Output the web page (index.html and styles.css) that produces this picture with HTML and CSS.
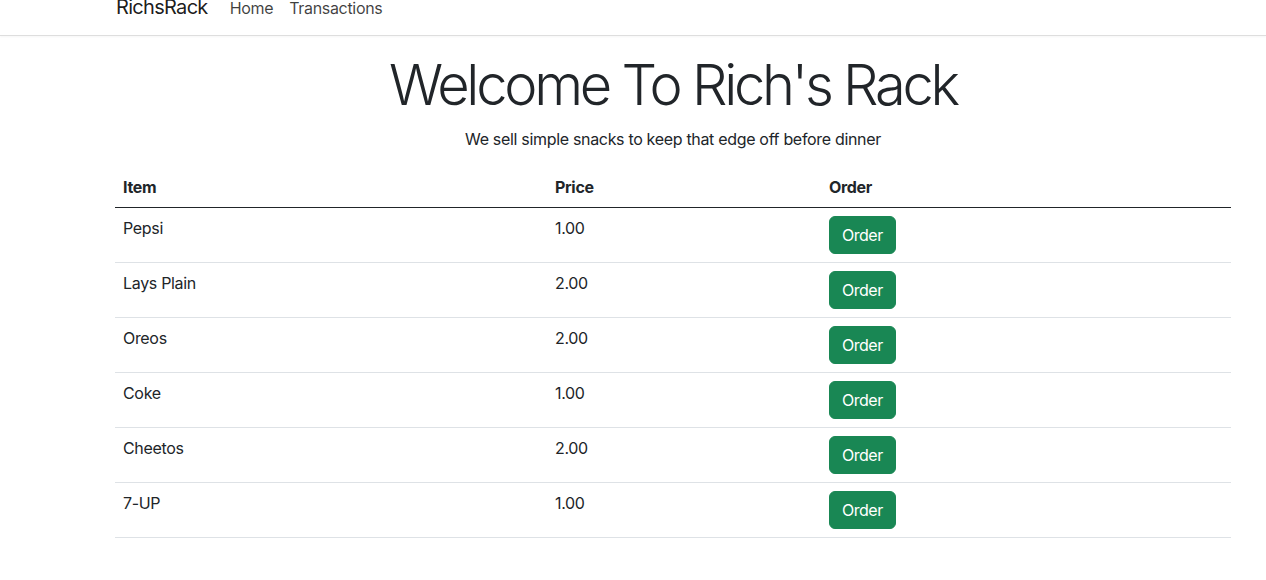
FILE: index.html
```html
<!DOCTYPE html>
<html lang="en">
<head>
<meta charset="utf-8">
<title>RichsRack</title>
<link rel="stylesheet" href="styles.css">
</head>
<body>
<nav class="navbar">
  <div class="container nav-inner">
    <a class="brand" href="#">RichsRack</a>
    <a class="nav-link" href="#">Home</a>
    <a class="nav-link" href="#">Transactions</a>
  </div>
</nav>
<main class="container main">
  <h1 class="title">Welcome To Rich's Rack</h1>
  <p class="subtitle">We sell simple snacks to keep that edge off before dinner</p>
  <table class="table">
    <thead>
      <tr><th class="col-item">Item</th><th class="col-price">Price</th><th>Order</th></tr>
    </thead>
    <tbody>
      <tr><td>Pepsi</td><td>1.00</td><td><button class="btn">Order</button></td></tr>
      <tr><td>Lays Plain</td><td>2.00</td><td><button class="btn">Order</button></td></tr>
      <tr><td>Oreos</td><td>2.00</td><td><button class="btn">Order</button></td></tr>
      <tr><td>Coke</td><td>1.00</td><td><button class="btn">Order</button></td></tr>
      <tr><td>Cheetos</td><td>2.00</td><td><button class="btn">Order</button></td></tr>
      <tr><td>7-UP</td><td>1.00</td><td><button class="btn">Order</button></td></tr>
    </tbody>
  </table>
</main>
</body>
</html>
```
FILE: styles.css
```css
* { box-sizing: border-box; }
html, body { margin: 0; background: #fff; }
body {
  font-family: Inter, "Noto Sans", sans-serif;
  font-size: 16px;
  line-height: 1.5;
  letter-spacing: -0.02em;
  color: #212529;
}
.container {
  margin-left: 115px;
  width: 1116px;
}
.navbar {
  height: 36px;
  overflow: hidden;
  border-bottom: 1px solid #dedede;
  box-shadow: 0 1px 2px rgba(0,0,0,0.04);
}
.nav-inner {
  display: flex;
  align-items: baseline;
  margin-top: -8px;
  padding-left: 1px;
}
.brand {
  font-size: 20px;
  line-height: 30px;
  color: rgba(0,0,0,0.9);
  text-decoration: none;
  margin-right: 14px;
  letter-spacing: -0.035em;
}
.nav-link {
  color: rgba(0,0,0,0.75);
  text-decoration: none;
  padding: 0 8px;
  line-height: 24px;
}
.main {
  padding-top: 16px;
}
.title {
  margin: 0 0 8px;
  font-size: 56px;
  font-weight: 300;
  line-height: 1.2;
  text-align: center;
  letter-spacing: -0.058em;
}
.subtitle {
  margin: 0 0 16px;
  text-align: center;
}
.table {
  width: 100%;
  border-collapse: collapse;
}
.table th, .table td {
  padding: 8px;
  text-align: left;
  vertical-align: top;
  border-bottom: 1px solid #dee2e6;
}
.table th { font-weight: 700; }
.table thead th { border-bottom: 1px solid #212529; }
.col-item { width: 432px; }
.col-price { width: 274px; }
.btn {
  font-family: inherit;
  font-size: 16px;
  line-height: 24px;
  letter-spacing: -0.03em;
  padding: 6px 12px;
  color: #fff;
  background: #198754;
  border: 1px solid #198754;
  border-radius: 6px;
  cursor: pointer;
}
```
